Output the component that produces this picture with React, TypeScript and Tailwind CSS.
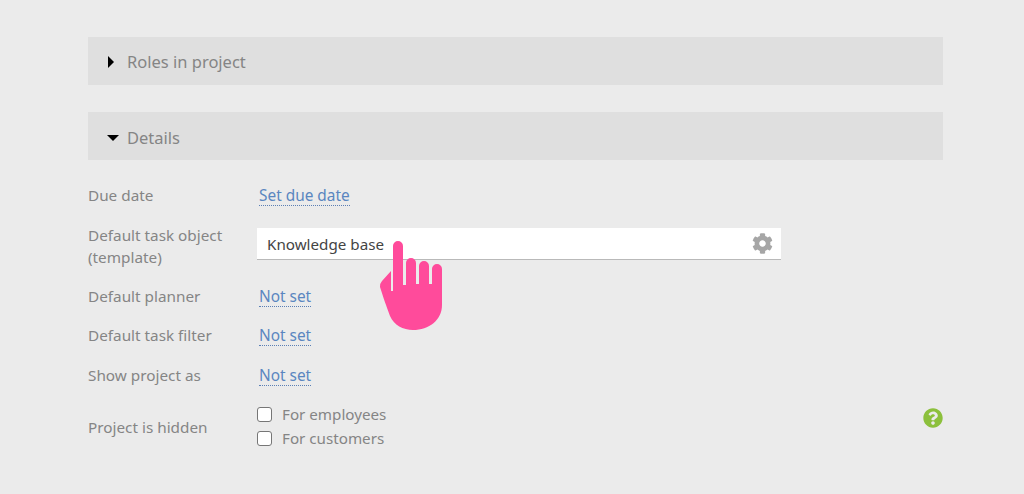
import { FaCog, FaQuestionCircle } from "react-icons/fa";

const font = { fontFamily: '"Noto Sans", "Open Sans", sans-serif' };

function Link({ children }: { children: string }) {
  return (
    <span className="ml-[2px] border-b border-dotted border-[#5b7fb5] text-[15.4px] leading-[19px] text-[#5a86c0]">
      {children}
    </span>
  );
}

function Row({ label, value, className }: { label: string; value: string; className: string }) {
  return (
    <div className={`flex h-[32px] items-center ${className}`}>
      <div className="w-[169px] -translate-y-px text-[15.3px] text-[#858585]">{label}</div>
      <Link>{value}</Link>
    </div>
  );
}

function Check({ label }: { label: string }) {
  return (
    <div className="flex h-[24px] items-center">
      <span className="h-[15px] w-[15px] rounded-[3px] border border-[#767676] bg-white" />
      <span className="ml-[10px] text-[15.2px] text-[#858585]">{label}</span>
    </div>
  );
}

function Hand() {
  return (
    <svg
      className="absolute left-[121px] top-[10px]"
      width="68"
      height="96"
      viewBox="378 238 68 96"
    >
      <path
        fill="#ff4b9b"
        d="M393 246a5 5 0 0 1 10 0V285L406 285V263a5 5 0 0 1 10 0V284H419V266a5 5 0 0 1 10 0V284H432V269a5 5 0 0 1 10 0V305C442 320 429 330 413 330C403 330 394 325 390 316C388 310 385 303 380 287Q380 283 382 281L391 271V291H393Z"
      />
    </svg>
  );
}

export default function App() {
  return (
    <div style={font} className="h-[494px] w-[1024px] overflow-hidden bg-[#ebebeb] pl-[88px] pr-[81px] pt-[37px]">
      <div className="flex h-[48px] items-center bg-[#dfdfdf] pl-[20px]">
        <span className="h-0 w-0 translate-y-px border-y-[6px] border-l-[6px] border-y-transparent border-l-black" />
        <span className="ml-[13px] pt-[2px] text-[16.5px] text-[#858585]">Roles in project</span>
      </div>
      <div className="mt-[27px] flex h-[48px] items-center bg-[#dfdfdf] pl-[19px]">
        <span className="h-0 w-0 translate-y-[2px] border-x-[6px] border-t-[6px] border-x-transparent border-t-black" />
        <span className="ml-[8px] pt-[4px] text-[16.5px] text-[#858585]">Details</span>
      </div>

      <Row label="Due date" value="Set due date" className="mt-[20px]" />

      <div className="mt-[16px] flex h-[44px] items-start">
        <div className="-mt-[4px] w-[169px] text-[15.3px] leading-[22px] text-[#858585]">
          Default task object
          <br />
          (template)
        </div>
        <div className="relative flex h-[32px] w-[524px] items-center justify-between border-b border-[#b9b9b9] bg-white pl-[10px] pr-[8px]">
          <span className="translate-y-px text-[15.2px] text-[#444444]">Knowledge base</span>
          <FaCog size={21} color="#a6a6a6" />
          <Hand />
        </div>
      </div>

      <Row label="Default planner" value="Not set" className="mt-[9px]" />
      <Row label="Default task filter" value="Not set" className="mt-[7px]" />
      <Row label="Show project as" value="Not set" className="mt-[8px]" />

      <div className="mt-[10px] flex items-center">
        <div className="w-[169px] translate-y-px text-[15.3px] text-[#858585]">Project is hidden</div>
        <div className="flex-1">
          <Check label="For employees" />
          <Check label="For customers" />
        </div>
        <FaQuestionCircle size={20} color="#8cc03c" className="-translate-y-[8px]" />
      </div>
    </div>
  );
}
